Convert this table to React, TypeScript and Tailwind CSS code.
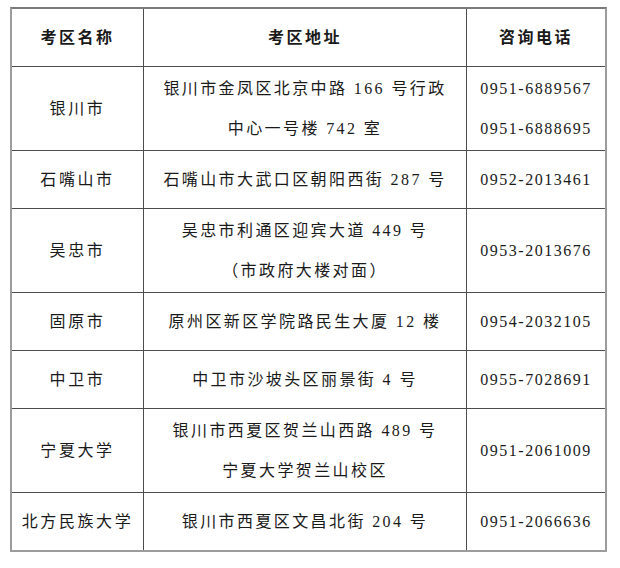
import React from "react";

type Row = {
  name: string;
  address: string[];
  phones: string[];
  tall?: boolean;
};

const rows: Row[] = [
  {
    name: "银川市",
    address: ["银川市金凤区北京中路 166 号行政", "中心一号楼 742 室"],
    phones: ["0951-6889567", "0951-6888695"],
    tall: true,
  },
  { name: "石嘴山市", address: ["石嘴山市大武口区朝阳西街 287 号"], phones: ["0952-2013461"] },
  {
    name: "吴忠市",
    address: ["吴忠市利通区迎宾大道 449 号", "（市政府大楼对面）"],
    phones: ["0953-2013676"],
    tall: true,
  },
  { name: "固原市", address: ["原州区新区学院路民生大厦 12 楼"], phones: ["0954-2032105"] },
  { name: "中卫市", address: ["中卫市沙坡头区丽景街 4 号"], phones: ["0955-7028691"] },
  {
    name: "宁夏大学",
    address: ["银川市西夏区贺兰山西路 489 号", "宁夏大学贺兰山校区"],
    phones: ["0951-2061009"],
    tall: true,
  },
  { name: "北方民族大学", address: ["银川市西夏区文昌北街 204 号"], phones: ["0951-2066636"] },
];

const cell = "flex flex-col items-center justify-center text-center";

const Lines = ({ items }: { items: string[] }) => (
  <>
    {items.map((t) => (
      <div key={t} className="leading-[40px] whitespace-nowrap">
        {t}
      </div>
    ))}
  </>
);

export default function App() {
  return (
    <div
      className="bg-white w-[620px] h-[568px] pt-[7px] pl-[10px] text-[16px] text-[#1a1a1a]"
      style={{ fontFamily: '"Liberation Serif", "Noto Sans CJK SC", serif' }}
    >
      <div className="w-[597px] border-2 border-[#9c9c9c] border-t-[#7a7a7a]">
        {/* Header */}
        <div className="grid grid-cols-[131px_323px_1fr] h-[57px] font-bold tracking-[2.5px]">
          <div className={cell}>考区名称</div>
          <div className={`${cell} border-l border-[#4d4d4d]`}>考区地址</div>
          <div className={`${cell} border-l border-[#4d4d4d]`}>咨询电话</div>
        </div>

        {rows.map((r) => (
          <div
            key={r.name}
            className={`grid grid-cols-[131px_323px_1fr] border-t border-[#4d4d4d] ${
              r.tall ? "h-[84px]" : "h-[58px]"
            }`}
          >
            <div className={`${cell} tracking-[2.6px]`}>{r.name}</div>
            <div className={`${cell} border-l border-[#4d4d4d] tracking-[2.4px]`}>
              <Lines items={r.address} />
            </div>
            <div className={`${cell} border-l border-[#4d4d4d] tracking-[1.5px]`}>
              <Lines items={r.phones} />
            </div>
          </div>
        ))}
      </div>
    </div>
  );
}
